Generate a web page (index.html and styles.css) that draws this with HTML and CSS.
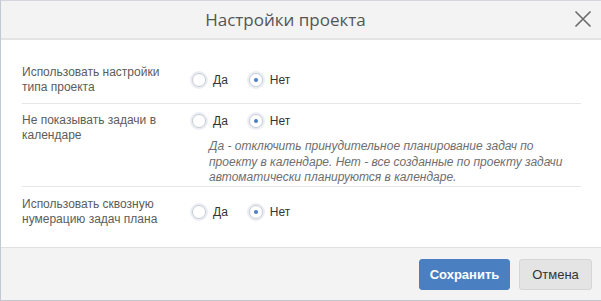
FILE: index.html
```html
<!DOCTYPE html>
<html lang="ru">
<head>
  <meta charset="UTF-8" />
  <title>Настройки проекта</title>
  <link rel="stylesheet" href="styles.css">
</head>
<body>
  <div class="modal">
    <div class="modal-header">
      <h1>Настройки проекта</h1>
      <span class="close">
        <svg width="18" height="18" viewBox="0 0 18 18"><path d="M1.5 1.5l15 15M16.5 1.5l-15 15" stroke="#6b6b6b" stroke-width="1.6" fill="none"/></svg>
      </span>
    </div>

    <div class="modal-body">
      <div class="setting">
        <div class="setting-label">Использовать настройки типа проекта</div>
        <div class="setting-control center">
          <div class="radios">
            <label class="radio"><span class="dot"></span>Да</label>
            <label class="radio checked"><span class="dot"></span>Нет</label>
          </div>
        </div>
      </div>

      <div class="setting with-hint">
        <div class="setting-label">Не показывать задачи в календаре</div>
        <div class="setting-control">
          <div class="radios">
            <label class="radio"><span class="dot"></span>Да</label>
            <label class="radio checked"><span class="dot"></span>Нет</label>
          </div>
          <p class="hint">Да - отключить принудительное планирование задач по проекту в календаре. Нет - все созданные по проекту задачи автоматически планируются в календаре.</p>
        </div>
      </div>

      <div class="setting last">
        <div class="setting-label">Использовать сквозную нумерацию задач плана</div>
        <div class="setting-control center">
          <div class="radios">
            <label class="radio"><span class="dot"></span>Да</label>
            <label class="radio checked"><span class="dot"></span>Нет</label>
          </div>
        </div>
      </div>
    </div>

    <div class="modal-footer">
      <button class="btn btn-primary">Сохранить</button>
      <button class="btn btn-default">Отмена</button>
    </div>
  </div>
</body>
</html>
```

FILE: styles.css
```css
* {
  box-sizing: border-box;
  margin: 0;
  padding: 0;
}

body {
  font-family: 'Liberation Sans', Arial, sans-serif;
  background: #fff;
}

.modal {
  width: 601px;
  height: 301px;
  border-top: 1px solid #d3d6dc;
  border-left: 1px solid #c3c8d2;
  border-bottom: 1px solid #c3c6cc;
  display: flex;
  flex-direction: column;
}

.modal-header {
  height: 39px;
  background: #f3f3f3;
  border-bottom: 2px solid #e3e3e3;
  display: flex;
  align-items: center;
  justify-content: center;
  position: relative;
}

.modal-header h1 {
  font-family: 'Open Sans', sans-serif;
  font-weight: 400;
  font-size: 17px;
  color: #555;
  margin-left: -31px;
  margin-top: -1px;
}

.close {
  position: absolute;
  right: 9px;
  top: 9px;
  width: 18px;
  height: 18px;
}

.close svg {
  display: block;
}

.modal-body {
  flex: 1;
  padding: 15px 20px 0 21px;
}

.setting {
  display: grid;
  grid-template-columns: 168px 1fr;
  border-bottom: 1px solid #e6e6e6;
  padding: 10px 0 8px;
}

.setting.with-hint {
  padding: 9px 0 0;
}

.setting.last {
  border-bottom: none;
  padding-top: 10px;
}

.setting-label {
  font-size: 12px;
  line-height: 15px;
  color: #5c5c5c;
  padding-right: 12px;
}

.setting-control {
  display: flex;
  flex-direction: column;
}

.setting-control.center {
  justify-content: center;
}

.radios {
  display: flex;
  gap: 19px;
}

.radio {
  display: flex;
  align-items: center;
  font-size: 12px;
  color: #333;
  height: 16px;
}

.dot {
  width: 14px;
  height: 14px;
  border-radius: 50%;
  border: 1px solid #c9ccd1;
  background: #fff;
  box-shadow: 0 0 0 2px #eaeef4;
  margin: 0 7px 0 2px;
  display: flex;
  align-items: center;
  justify-content: center;
}

.radio.checked .dot::after {
  content: '';
  width: 4px;
  height: 4px;
  border-radius: 50%;
  background: #4a7fc1;
}

.hint {
  font-size: 12px;
  font-style: italic;
  line-height: 15.5px;
  color: #6e6e6e;
  margin: 10px 0 0 19px;
  max-width: 365px;
}

.modal-footer {
  height: 53px;
  background: #f3f3f3;
  border-top: 1px solid #e0e0e0;
  display: flex;
  justify-content: flex-end;
  align-items: flex-start;
  gap: 9px;
  padding: 11px 9px 0 0;
}

.btn {
  font-family: 'Liberation Sans', Arial, sans-serif;
  font-size: 13px;
  height: 31px;
  border-radius: 3px;
  cursor: pointer;
}

.btn-primary {
  width: 91px;
  background: #4a7fc1;
  border: 1px solid #4a7fc1;
  color: #fff;
  font-weight: bold;
}

.btn-default {
  width: 73px;
  background: #e4e4e4;
  border: 1px solid #d6d6d6;
  color: #333;
}
```
